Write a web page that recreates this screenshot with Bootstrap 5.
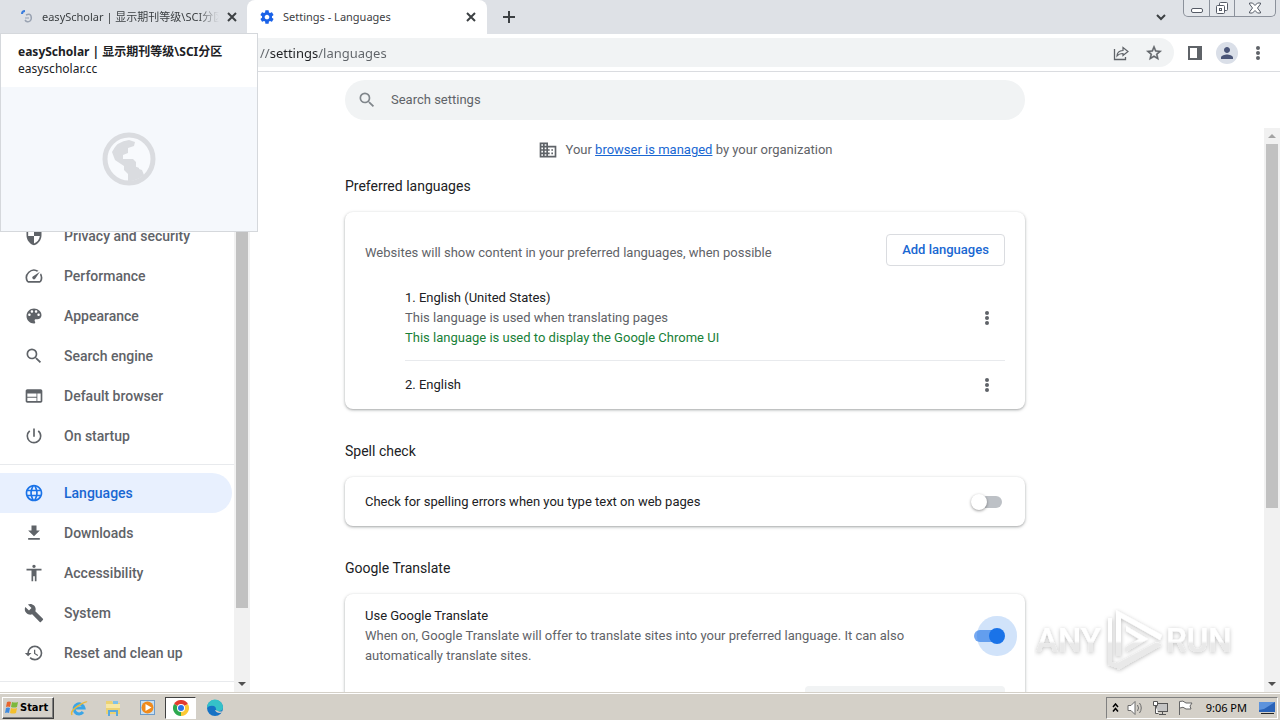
<!DOCTYPE html>
<html lang="en">
<head>
<meta charset="utf-8">
<meta name="viewport" content="width=device-width, initial-scale=1">
<title>Settings - Languages</title>
<link href="https://cdn.jsdelivr.net/npm/bootstrap@5.3.0/dist/css/bootstrap.min.css" rel="stylesheet">
<script src="https://cdn.jsdelivr.net/npm/bootstrap@5.3.0/dist/js/bootstrap.bundle.min.js"></script>
<style>
  :root { --ink:#202124; --muted:#5f6368; --blue:#1a73e8; --line:#e8eaed; }
  body { font-family: Roboto, "Noto Sans CJK SC", sans-serif; font-size: 13px; line-height: 20px; color: var(--ink); background:#fff; }
  svg { display:block; flex:none; }
  svg:not([fill]) { fill:currentColor; }
  button { font:inherit; color:inherit; }
  .bare { border:0; background:none; padding:0; display:flex; align-items:center; justify-content:center; }
  .ui-font { font-family: "Noto Sans", "Noto Sans CJK SC", sans-serif; }

  /* tab strip */
  .strip { height:34px; background:#dee1e6; }
  .tab { height:34px; font-size:11px; line-height:34px; color:#3c4043; }
  .tab-back { width:247px; padding:0 10px 0 20px; }
  .tab-front { width:240px; padding:0 11px 0 12px; background:#fff; border-radius:8px 8px 0 0; }
  .tab-title { flex:1; min-width:0; overflow:hidden; white-space:nowrap; }
  .fade-end { -webkit-mask-image:linear-gradient(90deg,#000 88%,transparent); mask-image:linear-gradient(90deg,#000 88%,transparent); }
  .win-btns { height:17px; border:1px solid #8b919b; border-top:0; border-radius:0 0 5px 5px; background:#e4e7eb; margin-right:4px; color:#555b66; }
  .win-btns button + button { border-left:1px solid #8b919b; }
  .w-min { width:25px; } .w-max { width:25px; } .w-close { width:41px; }

  /* toolbar */
  .toolbar { height:38px; border-bottom:1px solid #dadce0; color:var(--muted); padding-right:16px; gap:14px; }
  .omni { height:29px; background:#f1f3f4; border-radius:0 15px 15px 0; padding:0 11px 0 260px; }
  .omni input { border:0; padding:0; outline:0; font-size:13px; color:transparent; -webkit-background-clip:text; background-clip:text;
    background-image:linear-gradient(90deg,#5f6368 9px,#202124 9px,#202124 58px,#5f6368 58px); }
  .avatar { width:22px; height:22px; background:#dadfe8; color:#4a5578; }

  /* tab preview card */
  .hover-card { position:absolute; left:0; top:33px; width:258px; z-index:5; background:#fff; border:1px solid #d5d8dc; }
  .hover-head { height:53px; padding:9px 17px; font-size:12px; line-height:17px; white-space:nowrap; }
  .hover-pic { height:144px; background:#f5f8fc; color:#dadce0; }

  /* side menu */
  .side { width:250px; }
  .side-list { padding-top:144px; width:234px; }
  .side-list a { height:40px; padding-left:24px; gap:20px; color:var(--muted); font-size:14px; font-weight:500; text-decoration:none; white-space:nowrap; border-radius:0 20px 20px 0; margin-right:2px; }
  .side-list a.on { background:#e8f0fe; color:#1967d2; }
  .side-list a.on svg { color:var(--blue); }
  .rule { height:1px; background:var(--line); }

  .sbar { background:#f1f1f1; }
  .sbar-thumb { background:#c1c1c1; margin:0 2px; }
  .arrow { height:16px; display:flex; align-items:center; justify-content:center; color:#505050; }

  /* settings page */
  .page { padding-left:95px; }
  .column { max-width:680px; }
  .find { height:40px; border-radius:20px; background:#f1f3f4; padding:0 14px 0 12px; gap:14px; color:#80868b; }
  .find input { border:0; background:none; outline:0; padding:0; color:var(--muted); }
  .find input::placeholder { color:var(--muted); opacity:1; }
  .managed { padding-top:12px; gap:8px; color:var(--muted); }
  .managed a { color:#1967d2; }
  h2 { font-size:14px; line-height:20px; font-weight:400; margin:32px 0 16px; }
  h2.first { margin-top:16px; }
  .panel { background:#fff; border-radius:8px; padding:0 20px; box-shadow:0 1px 2px rgba(60,64,67,.3), 0 1px 3px 1px rgba(60,64,67,.15); }
  .panel-head { padding-top:22px; }
  .panel-head span { padding-top:6px; }
  .add-btn { width:119px; height:32px; border:1px solid #dadce0; border-radius:4px; background:#fff; color:#1967d2; font-weight:500; padding:0; }
  .langs { margin-left:40px; }
  .lang-main { padding:22px 0 12px; }
  .lang-alt { padding:14px 0; }
  .one-line { min-height:49px; }
  .detail { padding:12px 0 20px; }
  .muted { color:var(--muted); }
  .green { color:#188038; }
  .more { width:36px; color:var(--muted); }

  .toggle { appearance:none; width:28px; height:12px; border-radius:6px; background:#bdc1c6; position:relative; margin:0 3px 0 0; flex:none; }
  .toggle::before { content:""; position:absolute; left:-3px; top:-2px; width:16px; height:16px; border-radius:50%; background:#fff; box-shadow:0 1px 3px rgba(0,0,0,.4); }
  .toggle:checked { background:#76a9f1; }
  .toggle:checked::before { left:15px; background:var(--blue); box-shadow:0 0 0 12px rgba(26,115,232,.2); }
  .field { width:200px; height:32px; background:#f1f3f4; border-radius:4px 4px 0 0; }

  .stamp { position:absolute; right:36px; bottom:46px; z-index:4; pointer-events:none; }
  .stamp text { font-family:Roboto,sans-serif; font-size:33px; font-weight:500; }

  /* taskbar */
  .taskbar { height:28px; background:#d4d0c8; border-top:1px solid #d4d0c8; box-shadow:inset 0 1px #fff; padding:2px 2px 0 2px; font-size:11px; color:#000; }
  .start { width:52px; height:22px; background:#d4d0c8; border:1px solid; border-color:#fff #404040 #404040 #fff; box-shadow:inset -1px -1px #808080; font:bold 11px/18px "DejaVu Sans Condensed","DejaVu Sans",sans-serif; padding:0 1px; gap:1px; }
  .quick { width:34px; height:22px; }
  .quick.open { width:31px; background:#fff; border:1px solid; border-color:#404040 #fff #fff #404040; margin:0 2px 0 1px; }
  .tray { height:22px; border:1px solid; border-color:#808080 #fff #fff #808080; padding:0 2px 0 5px; }
</style>
</head>
<body>
<svg width="0" height="0" class="position-absolute" aria-hidden="true">
  <symbol id="i-x" viewBox="0 0 10 10"><path d="M1 1l8 8M9 1l-8 8" stroke="currentColor" stroke-width="2" fill="none"/></symbol>
  <symbol id="i-dots" viewBox="0 0 4 16"><circle cx="2" cy="3" r="2"/><circle cx="2" cy="8" r="2"/><circle cx="2" cy="13" r="2"/></symbol>
  <symbol id="i-search" viewBox="0 0 24 24"><path d="M15.5 14h-.79l-.28-.27A6.471 6.471 0 0 0 16 9.5 6.5 6.5 0 1 0 9.5 16c1.61 0 3.09-.59 4.23-1.57l.27.28v.79l5 4.99L20.49 19l-4.99-5zm-6 0C7.01 14 5 11.99 5 9.5S7.01 5 9.5 5 14 7.01 14 9.5 11.99 14 9.5 14z"/></symbol>
</svg>

<div class="vh-100 d-flex flex-column overflow-hidden position-relative">
  <header>
    <div class="strip d-flex ui-font">
      <div class="tab tab-back d-flex align-items-center">
        <svg width="14" height="14" viewBox="0 0 14 14" fill="none"><path d="M2 4a3 3 0 0 1 3-3" stroke="#3b7ddd" stroke-width="2"/><path d="M6 5q4-2 5 1t-1 5q-3 2-5-1" stroke="#9aa3b2" stroke-width="1.5"/><path d="M5 8h4" stroke="#b9c0cc" stroke-width="2"/></svg>
        <span class="tab-title fade-end ms-2 me-2">easyScholar | 显示期刊等级\SCI分区</span>
        <button class="bare" aria-label="Close tab"><svg width="10" height="10"><use href="#i-x"/></svg></button>
      </div>
      <div class="tab tab-front d-flex align-items-center">
        <svg width="16" height="16" viewBox="0 0 24 24" color="#1a62e8"><path d="M19.43 12.98c.04-.32.07-.64.07-.98s-.03-.66-.07-.98l2.11-1.65c.19-.15.24-.42.12-.64l-2-3.46c-.12-.22-.39-.3-.61-.22l-2.49 1c-.52-.4-1.08-.73-1.69-.98l-.38-2.65C14.46 2.18 14.25 2 14 2h-4c-.25 0-.46.18-.49.42l-.38 2.65c-.61.25-1.17.59-1.69.98l-2.49-1c-.23-.09-.49 0-.61.22l-2 3.46c-.13.22-.07.49.12.64l2.11 1.65c-.04.32-.07.65-.07.98s.03.66.07.98l-2.11 1.65c-.19.15-.24.42-.12.64l2 3.46c.12.22.39.3.61.22l2.49-1c.52.4 1.08.73 1.69.98l.38 2.65c.03.24.24.42.49.42h4c.25 0 .46-.18.49-.42l.38-2.65c.61-.25 1.17-.59 1.69-.98l2.49 1c.23.09.49 0 .61-.22l2-3.46c.12-.22.07-.49-.12-.64l-2.11-1.65zM12 15.5c-1.93 0-3.5-1.57-3.5-3.5s1.57-3.5 3.5-3.5 3.5 1.57 3.5 3.5-1.57 3.5-3.5 3.5z"/></svg>
        <span class="tab-title ms-2">Settings - Languages</span>
        <button class="bare" aria-label="Close tab"><svg width="10" height="10"><use href="#i-x"/></svg></button>
      </div>
      <button class="bare ms-3" aria-label="New tab"><svg width="12" height="12" viewBox="0 0 12 12"><path d="M5 0h2v5h5v2H7v5H5V7H0V5h5z" fill="#3c4043"/></svg></button>
      <div class="flex-grow-1"></div>
      <button class="bare me-3" aria-label="Search tabs"><svg width="12" height="8" viewBox="0 0 12 8"><path d="M2 2l4 4 4-4" stroke="#3c4043" stroke-width="2" fill="none"/></svg></button>
      <div class="win-btns d-flex">
        <button class="bare w-min" aria-label="Minimize"><svg width="12" height="16" viewBox="0 0 12 16"><rect x=".5" y="8.500" width="11" height="4" rx="1.500" fill="#fff" stroke="currentColor"/></svg></button>
        <button class="bare w-max" aria-label="Restore"><svg width="14" height="16" viewBox="0 0 14 16" fill="none" stroke="currentColor"><rect x="4.500" y="2.500" width="8" height="8" rx="1" fill="#fff"/><rect x="1.500" y="5.500" width="8" height="8" rx="1" fill="#fff"/><rect x="4.500" y="8.500" width="2" height="2"/></svg></button>
        <button class="bare w-close" aria-label="Close"><svg width="12" height="12" viewBox="0 0 12 12"><path d="M.5 1h3L6 3.500 8.500 1h3v1L8.500 6l3 4v1h-3L6 8.500 3.500 11h-3v-1l3-4-3-4z" fill="#fff" stroke="currentColor"/></svg></button>
      </div>
    </div>
    <div class="toolbar d-flex align-items-center ui-font">
      <div class="omni flex-grow-1 d-flex align-items-center">
        <input class="flex-grow-1 ui-font" type="text" aria-label="Address" value="//settings/languages">
        <button class="bare me-3" aria-label="Share"><svg width="16" height="16" viewBox="0 0 16 16" fill="none" stroke="currentColor"><path d="M1.500 4v10.500h11V12" stroke-width="1.300"/><path d="M4 11q0-5 6-5.500V2.500l5 4-5 4V8.500Q6 8.500 4 11z" stroke-width="1.200"/></svg></button>
        <button class="bare" aria-label="Bookmark"><svg width="18" height="18" viewBox="0 0 24 24"><path stroke="currentColor" stroke-width=".6" d="M22 9.240l-7.190-.62L12 2 9.190 8.630 2 9.240l5.460 4.730L5.820 21 12 17.270 18.180 21l-1.630-7.030L22 9.240zM12 15.400l-3.760 2.270 1-4.280-3.320-2.880 4.380-.38L12 6.100l1.710 4.040 4.380.38-3.320 2.880 1 4.280L12 15.400z"/></svg></button>
      </div>
      <button class="bare" aria-label="Side panel"><svg width="14" height="14" viewBox="0 0 14 14"><path fill-rule="evenodd" d="M0 0h14v14H0zM2 2v10h7V2z"/></svg></button>
      <button class="bare avatar rounded-circle" aria-label="Profile"><svg width="18" height="18" viewBox="0 0 24 24"><path d="M12 12c2.210 0 4-1.790 4-4s-1.790-4-4-4-4 1.790-4 4 1.790 4 4 4zm0 2c-2.670 0-8 1.340-8 4v2h16v-2c0-2.660-5.330-4-8-4z"/></svg></button>
      <button class="bare px-1" aria-label="Menu"><svg width="4" height="16"><use href="#i-dots"/></svg></button>
    </div>
  </header>

  <aside class="hover-card ui-font">
    <div class="hover-head"><div class="fw-bold">easyScholar | 显示期刊等级\SCI分区</div><div>easyscholar.cc</div></div>
    <div class="hover-pic d-flex align-items-center justify-content-center">
      <svg width="54" height="54" viewBox="0 0 54 54"><circle cx="27" cy="27" r="24" fill="#f8fafd" stroke="currentColor" stroke-width="5"/><path d="M10 20Q15 9 27 8l6 2-1 4-6 2v5l-5 2v4h10l3 3v6l6 2 2 5Q35 49 26 49v-7l-4-4v-4l-9-6z"/><path d="M27 36q6-3 10 0l1 9-10 4z"/></svg>
    </div>
  </aside>

  <div class="d-flex flex-grow-1 overflow-hidden">
    <nav class="side d-flex flex-shrink-0 overflow-hidden" aria-label="Settings sections">
      <div class="side-list flex-shrink-0">
        <a href="#" class="d-flex align-items-center"><svg width="20" height="20" viewBox="0 0 24 24"><path d="M12 1L3 5v6c0 5.550 3.840 10.740 9 12 5.160-1.260 9-6.450 9-12V5l-9-4zm0 10.990h7c-.53 4.120-3.280 7.790-7 8.940V12H5V6.300l7-3.110v8.800z"/></svg>Privacy and security</a>
        <a href="#" class="d-flex align-items-center"><svg width="20" height="20" viewBox="0 0 24 24"><path d="M20.380 8.570l-1.230 1.850a8 8 0 0 1-.22 7.580H5.070A8 8 0 0 1 15.580 6.850l1.850-1.230A10 10 0 0 0 3.350 19a2 2 0 0 0 1.720 1h13.850a2 2 0 0 0 1.740-1 10 10 0 0 0-.27-10.440zM10.590 15.410a2 2 0 0 0 2.830 0l5.660-8.490-8.490 5.660a2 2 0 0 0 0 2.830z"/></svg>Performance</a>
        <a href="#" class="d-flex align-items-center"><svg width="20" height="20" viewBox="0 0 24 24"><path d="M12 3c-4.970 0-9 4.030-9 9s4.030 9 9 9c.83 0 1.500-.67 1.500-1.500 0-.39-.15-.74-.39-1.010-.23-.26-.38-.61-.38-.99 0-.83.67-1.500 1.500-1.500H16c2.760 0 5-2.240 5-5 0-4.420-4.030-8-9-8zm-5.500 9c-.83 0-1.500-.67-1.500-1.500S5.670 9 6.500 9 8 9.670 8 10.500 7.330 12 6.500 12zm3-4C8.670 8 8 7.330 8 6.500S8.670 5 9.500 5s1.500.67 1.500 1.500S10.330 8 9.500 8zm5 0c-.83 0-1.500-.67-1.500-1.500S13.670 5 14.500 5s1.500.67 1.500 1.500S15.330 8 14.500 8zm3 4c-.83 0-1.500-.67-1.500-1.500S16.670 9 17.500 9s1.500.67 1.500 1.500-.67 1.500-1.500 1.500z"/></svg>Appearance</a>
        <a href="#" class="d-flex align-items-center"><svg width="20" height="20"><use href="#i-search"/></svg>Search engine</a>
        <a href="#" class="d-flex align-items-center"><svg width="20" height="20" viewBox="0 0 24 24"><path d="M20 4H4c-1.100 0-1.990.9-1.990 2L2 18c0 1.100.9 2 2 2h16c1.100 0 2-.9 2-2V6c0-1.100-.9-2-2-2zm-5 14H4v-4h11v4zm0-5H4V9h11v4zm5 5h-4V9h4v9z"/></svg>Default browser</a>
        <a href="#" class="d-flex align-items-center"><svg width="20" height="20" viewBox="0 0 24 24"><path d="M13 3h-2v10h2V3zm4.830 2.170l-1.420 1.420A6.920 6.920 0 0 1 19 12c0 3.870-3.130 7-7 7A6.995 6.995 0 0 1 7.580 6.580L6.170 5.170A8.932 8.932 0 0 0 3 12a9 9 0 0 0 18 0c0-2.740-1.230-5.180-3.170-6.830z"/></svg>On startup</a>
        <div class="rule my-2"></div>
        <a href="#" class="on d-flex align-items-center" aria-current="page"><svg width="20" height="20" viewBox="0 0 24 24"><path d="M11.990 2C6.470 2 2 6.480 2 12s4.470 10 9.990 10C17.520 22 22 17.520 22 12S17.520 2 11.990 2zm6.930 6h-2.950a15.650 15.650 0 0 0-1.380-3.560A8.030 8.030 0 0 1 18.920 8zM12 4.040c.83 1.200 1.480 2.530 1.910 3.960h-3.820c.43-1.430 1.080-2.760 1.910-3.960zM4.260 14C4.100 13.360 4 12.690 4 12s.1-1.360.26-2h3.380c-.08.66-.14 1.320-.14 2 0 .68.06 1.340.14 2H4.260zm.82 2h2.950c.32 1.250.78 2.450 1.380 3.560A7.987 7.987 0 0 1 5.080 16zm2.950-8H5.080a7.987 7.987 0 0 1 4.330-3.560A15.650 15.650 0 0 0 8.030 8zM12 19.960c-.83-1.200-1.480-2.530-1.910-3.960h3.820c-.43 1.430-1.080 2.760-1.910 3.960zM14.340 14H9.660c-.09-.66-.16-1.320-.16-2 0-.68.07-1.350.16-2h4.680c.09.65.16 1.320.16 2 0 .68-.07 1.340-.16 2zm.25 5.560c.6-1.110 1.060-2.310 1.380-3.560h2.950a8.030 8.030 0 0 1-4.330 3.560zM16.360 14c.08-.66.14-1.320.14-2 0-.68-.06-1.340-.14-2h3.380c.16.64.26 1.310.26 2s-.1 1.360-.26 2h-3.380z"/></svg>Languages</a>
        <a href="#" class="d-flex align-items-center"><svg width="20" height="20" viewBox="0 0 24 24"><path d="M19 9h-4V3H9v6H5l7 7 7-7zM5 18v2h14v-2H5z"/></svg>Downloads</a>
        <a href="#" class="d-flex align-items-center"><svg width="20" height="20" viewBox="0 0 24 24"><path d="M12 2c1.100 0 2 .9 2 2s-.9 2-2 2-2-.9-2-2 .9-2 2-2zm9 7h-6v13h-2v-6h-2v6H9V9H3V7h18v2z"/></svg>Accessibility</a>
        <a href="#" class="d-flex align-items-center"><svg width="20" height="20" viewBox="0 0 24 24"><path d="M22.700 19l-9.100-9.100c.9-2.300.4-5-1.500-6.900-2-2-5-2.400-7.400-1.300L9 6 6 9 1.600 4.700C.4 7.100.9 10.100 2.900 12.100c1.900 1.900 4.600 2.400 6.900 1.500l9.100 9.100c.4.4 1 .4 1.400 0l2.300-2.300c.5-.4.5-1.100.1-1.400z"/></svg>System</a>
        <a href="#" class="d-flex align-items-center"><svg width="20" height="20" viewBox="0 0 24 24"><path d="M13 3a9 9 0 0 0-9 9H1l3.890 3.890.07.14L9 12H6c0-3.870 3.130-7 7-7s7 3.130 7 7-3.130 7-7 7c-1.930 0-3.680-.79-4.940-2.060l-1.420 1.420A8.954 8.954 0 0 0 13 21a9 9 0 0 0 0-18zm-1 5v5l4.280 2.540.72-1.210-3.500-2.080V8H12z"/></svg>Reset and clean up</a>
        <div class="rule mt-2"></div>
      </div>
      <div class="sbar flex-grow-1 d-flex flex-column">
        <div class="sbar-thumb" style="height:86.500%"></div>
        <div class="arrow mt-auto"><svg width="8" height="4" viewBox="0 0 8 4"><path d="M0 0h8L4 4z"/></svg></div>
      </div>
    </nav>

    <main class="flex-grow-1 d-flex flex-column overflow-hidden">
      <div class="page pt-2 pb-2">
        <div class="column find d-flex align-items-center"><svg width="20" height="20"><use href="#i-search"/></svg><input class="flex-grow-1" type="search" aria-label="Search settings" placeholder="Search settings"></div>
      </div>
      <div class="flex-grow-1 d-flex overflow-hidden">
        <div class="page flex-grow-1 overflow-hidden">
          <div class="column">
            <div class="managed d-flex justify-content-center align-items-center">
              <svg width="20" height="20" viewBox="0 0 24 24"><path d="M12 7V3H2v18h20V7H12zM6 19H4v-2h2v2zm0-4H4v-2h2v2zm0-4H4V9h2v2zm0-4H4V5h2v2zm4 12H8v-2h2v2zm0-4H8v-2h2v2zm0-4H8V9h2v2zm0-4H8V5h2v2zm10 12h-8v-2h2v-2h-2v-2h2v-2h-2V9h8v10zm-2-8h-2v2h2v-2zm0 4h-2v2h2v-2z"/></svg>
              <span>Your <a href="#">browser is managed</a> by your organization</span>
            </div>
            <h2 class="first">Preferred languages</h2>
            <section class="panel">
              <div class="panel-head d-flex justify-content-between align-items-center">
                <span class="muted">Websites will show content in your preferred languages, when possible</span>
                <button class="add-btn">Add languages</button>
              </div>
              <div class="langs">
                <div class="lang-main d-flex align-items-center">
                  <div class="flex-grow-1"><div>1. English (United States)</div><div class="muted">This language is used when translating pages</div><div class="green">This language is used to display the Google Chrome UI</div></div>
                  <button class="bare more" aria-label="More actions"><svg width="4" height="16"><use href="#i-dots"/></svg></button>
                </div>
                <div class="rule"></div>
                <div class="lang-alt d-flex align-items-center">
                  <div class="flex-grow-1">2. English</div>
                  <button class="bare more" aria-label="More actions"><svg width="4" height="16"><use href="#i-dots"/></svg></button>
                </div>
              </div>
            </section>
            <h2>Spell check</h2>
            <section class="panel one-line d-flex align-items-center justify-content-between">
              <label for="spell">Check for spelling errors when you type text on web pages</label>
              <input class="toggle" type="checkbox" role="switch" id="spell">
            </section>
            <h2>Google Translate</h2>
            <section class="panel">
              <div class="detail d-flex align-items-center justify-content-between">
                <label for="translate">Use Google Translate<span class="d-block muted">When on, Google Translate will offer to translate sites into your preferred language. It can also<br>automatically translate sites.</span></label>
                <input class="toggle" type="checkbox" role="switch" id="translate" checked>
              </div>
              <div class="d-flex justify-content-end"><div class="field"></div></div>
            </section>
          </div>
        </div>
        <div class="sbar d-flex flex-column flex-shrink-0" style="width:16px">
          <div class="arrow"><svg width="8" height="4" viewBox="0 0 8 4"><path d="M0 4h8L4 0z" fill="#a3a3a3"/></svg></div>
          <div class="sbar-thumb" style="height:64.500%"></div>
          <div class="arrow mt-auto"><svg width="8" height="4" viewBox="0 0 8 4"><path d="M0 0h8L4 4z"/></svg></div>
        </div>
      </div>
    </main>
  </div>

  <div class="stamp">
    <svg width="210" height="66" viewBox="0 0 210 66">
      <defs><linearGradient id="g" gradientUnits="userSpaceOnUse" x1="0" y1="0" x2="0" y2="66"><stop offset=".5" stop-color="#fff"/><stop offset=".54" stop-color="#e9e9e9"/></linearGradient>
      <filter id="s" x="-10%" y="-10%" width="120%" height="130%"><feDropShadow dx="0" dy="1" stdDeviation="2" flood-color="#000" flood-opacity=".28"/></filter></defs>
      <g filter="url(#s)" fill="url(#g)">
        <text x="2" y="44">ANY</text><text x="132" y="44">RUN</text>
        <path d="M82 2l46 25-2 5-39-22v38h-5zM74 10h4v44l8 2v5l-12-4zM82 56l41-22 5 3-44 25zM92 18l22 13-22 13v-5l13-8-13-8z"/>
      </g>
    </svg>
  </div>

  <footer class="taskbar d-flex align-items-center flex-shrink-0">
    <button class="start d-flex align-items-center"><svg width="15" height="15" viewBox="0 0 15 15"><path d="M3 2q2-1 4 0L6 7Q4 6 2 7z" fill="#e8642c"/><path d="M8 2q3 1 6 0l-1 5q-3 1-6 0z" fill="#7cb83c"/><path d="M2 8q2-1 4 0l-1 5q-2-1-4 0z" fill="#3f8be0"/><path d="M7 8q3 1 6 0l-1 5q-3 1-6 0z" fill="#f4c02c"/></svg>Start</button>
    <button class="bare quick ms-2" aria-label="Internet Explorer"><svg width="18" height="18" viewBox="0 0 18 18" fill="none"><path d="M4 9h10a5 5 0 1 0-1 4" stroke="#3ba5e6" stroke-width="3"/><path d="M2 16q-2-4 6-9t9-4" stroke="#e9b93c" stroke-width="1.500"/></svg></button>
    <button class="bare quick" aria-label="Explorer"><svg width="18" height="18" viewBox="0 0 18 18"><path d="M2 2h6l1 2h7v11H2z" fill="#ecd272"/><path d="M9 2h5v4H9z" fill="#7fc1e8"/><path d="M2 5h14v4H2z" fill="#f7e7a4"/><path d="M4 17v-6h10v6h-2v-4H6v4z" fill="#5aa8dc"/></svg></button>
    <button class="bare quick" aria-label="Media Player"><svg width="17" height="17" viewBox="0 0 17 17"><path d="M1 1h15v15H1z" fill="#6d9bc9"/><path d="M2 2h13v13H2z" fill="#c7dff2"/><circle cx="8.500" cy="8.500" r="6" fill="#f08a1c"/><path d="M6.500 5l6 3.500-6 3.500z" fill="#fff"/></svg></button>
    <button class="bare quick open" aria-label="Chrome"><svg width="16" height="16" viewBox="0 0 16 16"><path d="M8 8L1.070 4A8 8 0 0 1 14.930 4z" fill="#e33b2e"/><path d="M8 8l6.930-4A8 8 0 0 1 8 16z" fill="#fcc934"/><path d="M8 8v8A8 8 0 0 1 1.070 4z" fill="#2da94f"/><circle cx="8" cy="8" r="4" fill="#fff"/><circle cx="8" cy="8" r="3" fill="#2b73e8"/></svg></button>
    <button class="bare quick" aria-label="Edge"><svg width="18" height="18" viewBox="0 0 18 18"><circle cx="9" cy="9" r="8" fill="#1672c4"/><path d="M1 9a8 8 0 0 1 16-1q0 4-4 4-3 0-3-2t-2-3Q3 6 1 9z" fill="#35c1c8"/><path d="M9 11q1 3 5 3 2 0 3-2-3 1-5 0t-3-1z" fill="#d4d0c8"/></svg></button>
    <div class="tray d-flex align-items-center ms-auto gap-2">
      <svg width="7" height="10" viewBox="0 0 7 10"><path d="M1 4l2.500-3L6 4M1 8.500l2.500-3 2.500 3" stroke="#000" stroke-width="1.500" fill="none"/></svg>
      <svg width="17" height="16" viewBox="0 0 17 16" fill="none" stroke="#6b6b6b"><path d="M1 5.500h3l4-4v13l-4-4H1z" fill="#fff"/><path d="M10.500 5q2 3 0 6M12.500 3q3.500 5 0 10"/></svg>
      <svg width="17" height="16" viewBox="0 0 17 16" stroke="#555"><rect x="4.500" y="3.500" width="11" height="8" fill="#c4c4c4"/><path d="M7 14.500h7M10.500 12v2M1.500 1.500h4v4h-4zM3.500 5.500v8h3" fill="#fff"/></svg>
      <svg width="17" height="16" viewBox="0 0 17 16"><path d="M2.500 15V1.500Q6 0 9 3h6l-2 3 1 3H9Q6 6 3 8" fill="#fff" stroke="#666"/></svg>
      <time class="ms-1 me-1 ui-font">9:06 PM</time>
      <svg width="16" height="14" viewBox="0 0 16 14"><path d="M0 1h16v10H0z" fill="#2a63b8"/><path d="M0 1h16L5 8 0 9z" fill="#5d93dc"/><path d="M2 12h13v1H2z" fill="#222"/></svg>
    </div>
  </footer>
</div>
</body>
</html>
